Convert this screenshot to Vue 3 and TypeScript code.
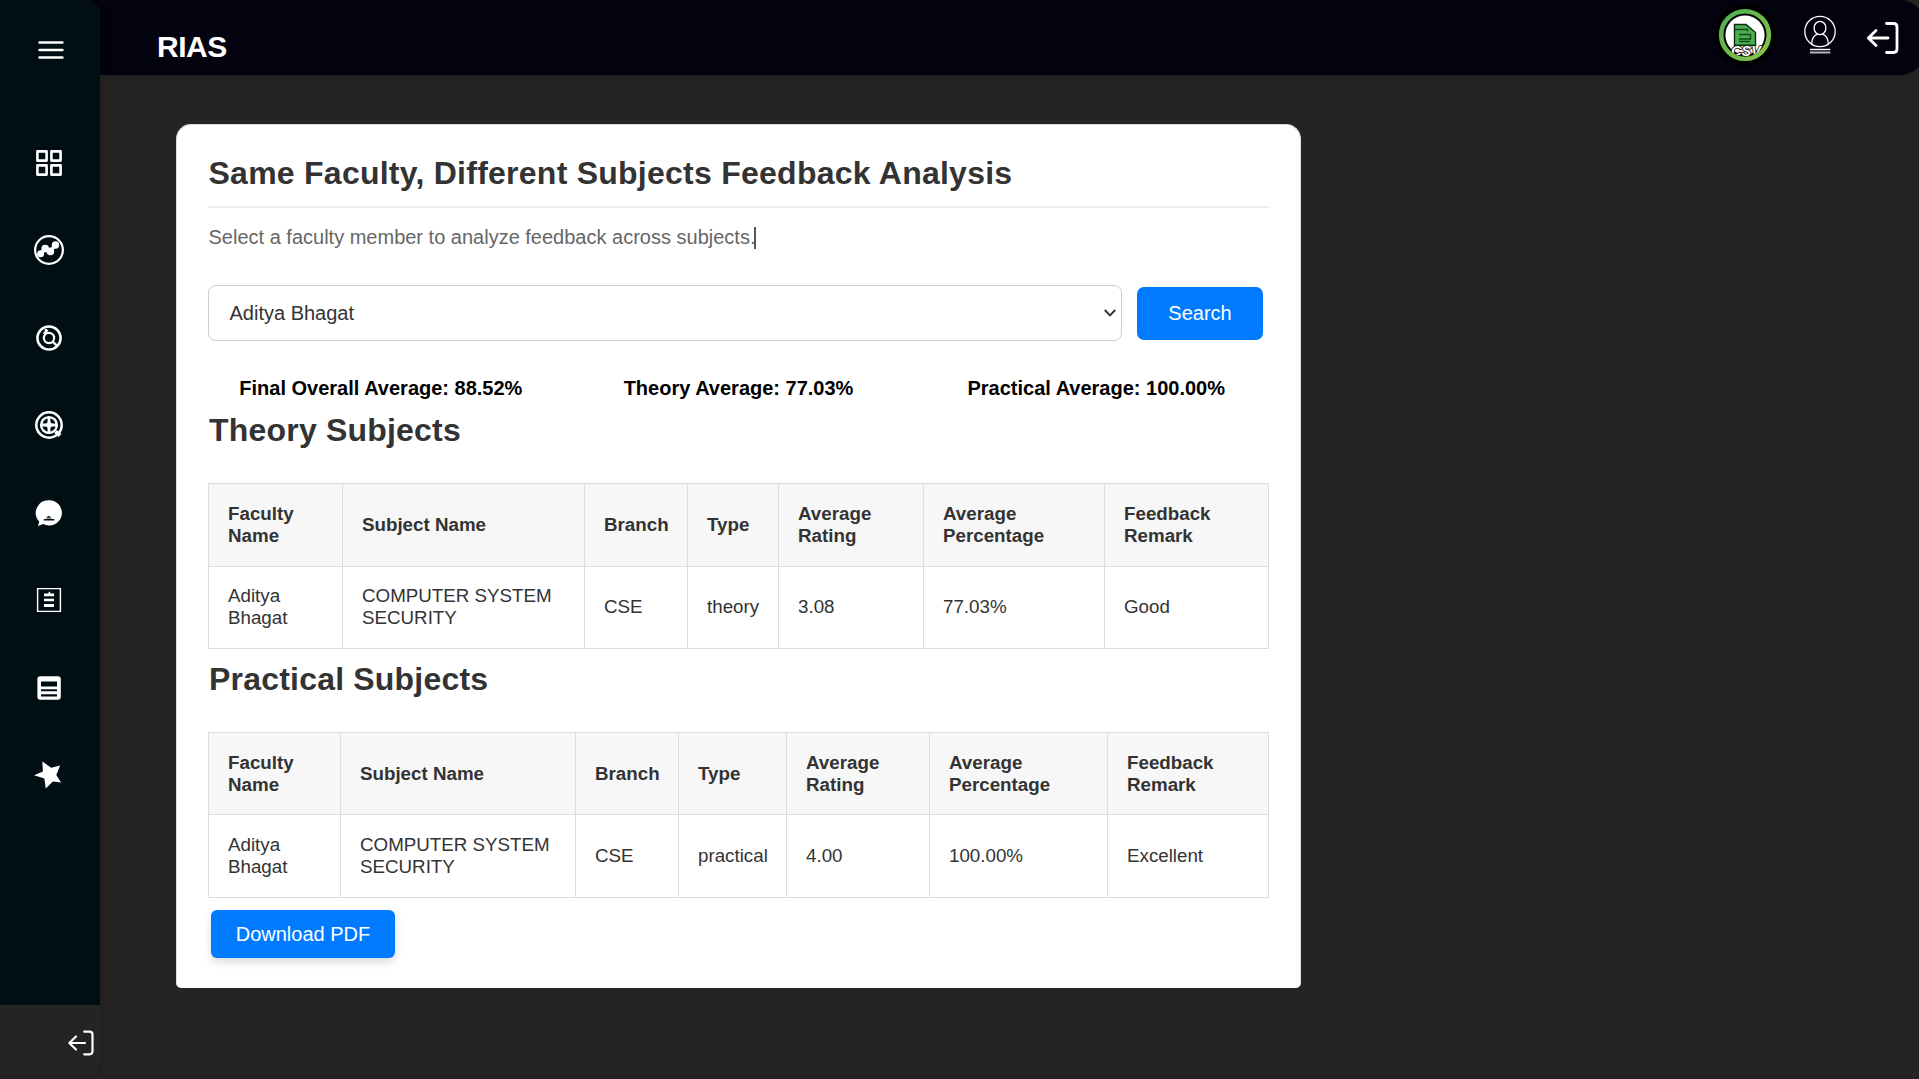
<script setup lang="ts">
interface SubjectRow {
  faculty: string
  subject: string
  branch: string
  type: string
  rating: string
  percentage: string
  remark: string
}

interface SubjectTable {
  title: string
  key: string
  rows: SubjectRow[]
}

const columns: string[] = [
  'Faculty Name',
  'Subject Name',
  'Branch',
  'Type',
  'Average Rating',
  'Average Percentage',
  'Feedback Remark',
]

const tables: SubjectTable[] = [
  {
    title: 'Theory Subjects',
    key: 'theory',
    rows: [
      { faculty: 'Aditya Bhagat', subject: 'COMPUTER SYSTEM SECURITY', branch: 'CSE', type: 'theory', rating: '3.08', percentage: '77.03%', remark: 'Good' },
    ],
  },
  {
    title: 'Practical Subjects',
    key: 'practical',
    rows: [
      { faculty: 'Aditya Bhagat', subject: 'COMPUTER SYSTEM SECURITY', branch: 'CSE', type: 'practical', rating: '4.00', percentage: '100.00%', remark: 'Excellent' },
    ],
  },
]

const averages: string[] = [
  'Final Overall Average: 88.52%',
  'Theory Average: 77.03%',
  'Practical Average: 100.00%',
]
</script>

<template>
  <div class="page">
    <aside class="sidebar">
      <nav class="menu">
        <a class="toggle">
          <svg width="32" height="32" viewBox="0 0 32 32" stroke="#fff" stroke-width="2.6" stroke-linecap="round">
            <path d="M4.6 8.5H27.4M4.6 16H27.4M4.6 23.5H27.4" />
          </svg>
        </a>
        <a class="item">
          <svg width="32" height="32" viewBox="0 0 32 32" fill="none" stroke="#fff" stroke-width="2.6" stroke-linejoin="round">
            <path d="M4.4 4.4h9.2v9.2H4.4zM18.4 4.4h9.2v9.2h-9.2zM4.4 18.4h9.2v9.2H4.4zM18.4 18.4h9.2v9.2h-9.2z" />
          </svg>
        </a>
        <a class="item">
          <svg width="32" height="32" viewBox="0 0 32 32" fill="none" stroke="#fff">
            <circle cx="16" cy="16" r="13.9" stroke-width="2.2" />
            <path d="M7 20l5-5.5 5.5 2.5 4.7-6" stroke-width="3.5" />
            <g fill="#fff" stroke="none">
              <circle cx="7.6" cy="19.8" r="3.5" /><circle cx="12.2" cy="14.6" r="3.8" />
              <circle cx="17.4" cy="17.4" r="3.8" /><circle cx="22.5" cy="11" r="3.7" />
            </g>
          </svg>
        </a>
        <a class="item">
          <svg width="32" height="32" viewBox="0 0 32 32" fill="none" stroke="#fff" stroke-width="2.5">
            <circle cx="16" cy="16" r="11.6" />
            <circle cx="16" cy="16" r="5.1" stroke-width="2.2" />
            <path d="M19.8 19.8l4.4 4M10.8 12l3.8-4.2M13 7v3.5" stroke-width="2.4" />
          </svg>
        </a>
        <a class="item">
          <svg width="32" height="32" viewBox="0 0 32 32" fill="none" stroke="#fff">
            <circle cx="16" cy="16" r="12.7" stroke-width="2.5" />
            <circle cx="16" cy="16" r="7.9" stroke-width="2.4" />
            <path d="M16 8v16M8 16h16" stroke-width="2.8" />
            <path d="M16 10.8l2 3.2 3.2 2-3.2 2-2 3.2-2-3.2-3.2-2 3.2-2z" fill="#fff" stroke="none" />
            <path d="M22.6 22.6l4.4 4" stroke-width="4" />
          </svg>
        </a>
        <a class="item">
          <svg width="32" height="32" viewBox="0 0 32 32">
            <path d="M16.2 3.2a12.7 12.7 0 1 1-6 23.9L4.9 28.9l1.4-4.3A12.7 12.7 0 0 1 16.2 3.2z" fill="#fff" />
            <path d="M10.8 22.2q5.2-1.5 10.6 0v1.2H10.8zM13.2 20.7q2.8-3.6 5 0z" fill="#010f14" />
          </svg>
        </a>
        <a class="item">
          <svg width="32" height="32" viewBox="0 0 32 32">
            <path d="M4.6 4.6h22.8v22.8H4.6z" fill="none" stroke="#fff" stroke-width="1.4" />
            <path d="M11 9.5h4l1.5-2.2 1.2 2.2H21v2.8H11zM11 14.8h10v2.4H11zM11 19.9h10v3H11z" fill="#fff" />
          </svg>
        </a>
        <a class="item">
          <svg width="32" height="32" viewBox="0 0 32 32">
            <rect x="4.4" y="4.3" width="23.4" height="23.4" rx="3" fill="#fff" />
            <path d="M8 9.4h16v5H8zM8 17.2h16v2H8zM8 22.2h16v2.2H8z" fill="#010f14" />
          </svg>
        </a>
        <a class="item">
          <svg width="32" height="32" viewBox="0 0 32 32">
            <path d="M9.3 2.4l8.8 6.4 9-2.3-3.8 9.4 4.8 7.5-8.2-1-7.2 7.2-1.3-10.1L1.1 16.2l8.8-3.7z" fill="#fff" />
          </svg>
        </a>
      </nav>
      <div class="sidebar-foot">
        <svg width="28" height="28" viewBox="0 0 28 28" fill="none" stroke="#fff" stroke-width="2.2" stroke-linecap="round" stroke-linejoin="round">
          <path d="M17.2 2.7h5.3q3 0 3 3v16.6q0 3-3 3h-5.3M18 14H2.5M9 7.5L2.3 14l6.7 6.5" />
        </svg>
      </div>
    </aside>

    <div class="main">
      <header class="topbar">
        <h1 class="brand">RIAS</h1>
        <div class="actions">
          <svg class="csv" width="62" height="62" viewBox="0 0 62 62">
            <defs>
              <linearGradient id="ring" x1="0" y1="0" x2="1" y2="1">
                <stop offset="0" stop-color="#4caf50" /><stop offset="1" stop-color="#8bc34a" />
              </linearGradient>
              <clipPath id="disc"><circle cx="31" cy="31" r="21.5" /></clipPath>
            </defs>
            <circle cx="31" cy="31" r="31" fill="#000" />
            <circle cx="31" cy="31" r="23.8" fill="none" stroke="url(#ring)" stroke-width="4.6" />
            <circle cx="31" cy="31" r="19.6" fill="#fff" />
            <g clip-path="url(#disc)">
              <text x="32" y="51.5" text-anchor="middle" font-family="Liberation Sans, sans-serif" font-size="14.5" font-weight="bold" font-style="italic" fill="#fff" stroke="#000" stroke-width="1.5" paint-order="stroke">CSV</text>
            </g>
            <path d="M20.5 20.5h11.5l9.5 8v12.8h-21z" fill="#4caf50" stroke="#0b2b10" stroke-width="1.4" />
            <path d="M21 25.5h12.5v2M25 30.5h11.5v4.5H25M25 37.5h11" fill="none" stroke="#12451a" stroke-width="1.3" />
          </svg>
          <svg class="user" width="34" height="40" viewBox="0 0 34 40" fill="none" stroke="#fff" stroke-width="1.3">
            <circle cx="17" cy="16.5" r="15.2" />
            <ellipse cx="17" cy="13" rx="5.9" ry="6.7" />
            <path d="M8.7 29.2q.2-7.6 5.2-9.8M25.3 29.2q-.2-7.6-5.2-9.8" />
            <path d="M7 34.5h20.3" stroke-width="1.4" />
            <path d="M7 37.5h20.3" stroke="#b5b5bb" stroke-width="2" />
          </svg>
          <svg width="34" height="34" viewBox="0 0 34 34" fill="none" stroke="#fff" stroke-width="2.8" stroke-linecap="round" stroke-linejoin="round">
            <path d="M20.5 2.5h7q3.500 0 3.500 3.500v22q0 3.500-3.500 3.500h-7M22 17H2.600M10 9.500L2.300 17l7.700 7.500" />
          </svg>
        </div>
      </header>

      <main class="card">
        <h2 class="title">Same Faculty, Different Subjects Feedback Analysis</h2>
        <p class="lead">Select a faculty member to analyze feedback across subjects.<span class="caret"></span></p>

        <div class="search">
          <div class="select">
            <span>Aditya Bhagat</span>
            <svg width="14" height="10" viewBox="0 0 14 10" fill="none" stroke="#333" stroke-width="2">
              <path d="M1.8 2L7 7.4 12.2 2" />
            </svg>
          </div>
          <button class="btn-search">Search</button>
        </div>

        <div class="averages">
          <span v-for="a in averages" :key="a">{{ a }}</span>
        </div>

        <section v-for="t in tables" :key="t.key" class="subjects" :class="t.key">
          <h2>{{ t.title }}</h2>
          <table>
            <colgroup><col v-for="(c, i) in columns" :key="c" :class="'c' + i" /></colgroup>
            <thead>
              <tr><th v-for="c in columns" :key="c">{{ c }}</th></tr>
            </thead>
            <tbody>
              <tr v-for="r in t.rows" :key="r.subject">
                <td>{{ r.faculty }}</td>
                <td>{{ r.subject }}</td>
                <td>{{ r.branch }}</td>
                <td>{{ r.type }}</td>
                <td>{{ r.rating }}</td>
                <td>{{ r.percentage }}</td>
                <td>{{ r.remark }}</td>
              </tr>
            </tbody>
          </table>
        </section>

        <button class="btn-pdf">Download PDF</button>
      </main>
    </div>
  </div>
</template>

<style>
body {
  margin: 0;
  background: #262324;
}
</style>

<style scoped>
* {
  box-sizing: border-box;
}
.page {
  display: flex;
  width: 1919px;
  height: 1079px;
  overflow: hidden;
  background: #262324;
  font-family: "Liberation Sans", Arial, sans-serif;
  color: #333;
}
.sidebar {
  position: relative;
  z-index: 1;
  display: flex;
  flex-direction: column;
  width: 100px;
  flex: none;
  border-radius: 0 15px 15px 0;
  box-shadow: 2px 0 6px rgba(0, 0, 0, 0.15);
  overflow: hidden;
  background: #262324;
}
.menu {
  height: 1005px;
  background: #010f14;
}
.menu a {
  display: flex;
  height: 87.5px;
  align-items: center;
  padding-left: 33px;
}
.menu a.toggle {
  height: 119px;
  padding: 34px 0 0 35px;
  align-items: flex-start;
}
.sidebar-foot {
  padding: 24px 0 0 67px;
}
.main {
  flex: 1;
  margin-left: -100px;
}
.topbar {
  display: flex;
  justify-content: space-between;
  height: 75px;
  margin-right: -4px;
  padding-left: 157px;
  background: #03020f;
  border-radius: 0 22px 22px 0;
  box-shadow: 0 2px 6px rgba(0, 0, 0, 0.15);
}
.brand {
  margin: 0;
  padding-top: 30px;
  font-size: 30px;
  line-height: 34px;
  letter-spacing: -0.5px;
  color: #fff;
}
.actions {
  display: flex;
  padding: 4px 23px 0 0;
}
.actions svg {
  margin-top: 16.5px;
}
.actions .csv {
  margin: 0 27px 0 0;
}
.actions .user {
  margin: 11px 29px 0 0;
}
.card {
  width: 1125px;
  height: 864px;
  margin: 49px 0 0 176px;
  padding: 30px 31px 0;
  border: 1px solid #ddd;
  border-bottom: 0;
  border-radius: 15px 15px 5px 5px;
  background: #fff;
}
.title {
  height: 53px;
  margin: 0;
  padding-left: 0.5px;
  border-bottom: 2px solid #eee;
  font-size: 32px;
  line-height: 36px;
  letter-spacing: 0.25px;
}
.lead {
  display: flex;
  align-items: center;
  margin: 17px 0 0;
  padding-left: 0.5px;
  height: 25px;
  font-size: 20px;
  color: #666;
}
.caret {
  width: 2px;
  height: 22px;
  margin-left: -1px;
  background: #555;
}
.search {
  display: flex;
  align-items: center;
  gap: 15px;
  margin-top: 35px;
}
.select {
  display: flex;
  align-items: center;
  justify-content: space-between;
  width: 914px;
  height: 56px;
  padding: 0 4px 0 20.5px;
  border: 1px solid #ccc;
  border-radius: 8px;
  font-size: 20px;
}
button {
  border: 0;
  padding: 0;
  background: #007bff;
  color: #fff;
  font: 20px "Liberation Sans", Arial, sans-serif;
}
.btn-search {
  width: 126px;
  height: 53px;
  border-radius: 7px;
}
.averages {
  display: grid;
  grid-template-columns: repeat(3, 357.7px);
  margin: 35px -7px 0 -6px;
  height: 24px;
  line-height: 24px;
  font-size: 20px;
  font-weight: bold;
  color: #000;
  text-align: center;
}
.subjects {
  height: 249px;
}
.subjects h2 {
  margin: 0;
  padding: 12px 0 0 1px;
  height: 83px;
  font-size: 32px;
  line-height: 36px;
  letter-spacing: 0.2px;
}
table {
  width: 1061px;
  table-layout: fixed;
  border-collapse: collapse;
  font-size: 18.75px;
  line-height: 22px;
}
th,
td {
  padding: 0 14px 1px 19px;
  height: 82px;
  border: 1px solid #ddd;
  text-align: left;
}
th {
  padding-bottom: 0;
  background: #f7f7f7;
}
.theory th,
.practical td {
  height: 83px;
}
.theory .c0 { width: 134px; }
.theory .c1 { width: 242px; }
.theory .c2 { width: 103px; }
.theory .c3 { width: 91px; }
.theory .c4 { width: 145px; }
.theory .c5 { width: 181px; }
.practical .c0 { width: 132px; }
.practical .c1 { width: 235px; }
.practical .c2 { width: 103px; }
.practical .c3 { width: 108px; }
.practical .c4 { width: 143px; }
.practical .c5 { width: 178px; }
.btn-pdf {
  width: 184px;
  height: 48px;
  margin: 12px 0 0 3px;
  border-radius: 6px;
  box-shadow: 0 4px 8px rgba(0, 0, 0, 0.15);
}
</style>
